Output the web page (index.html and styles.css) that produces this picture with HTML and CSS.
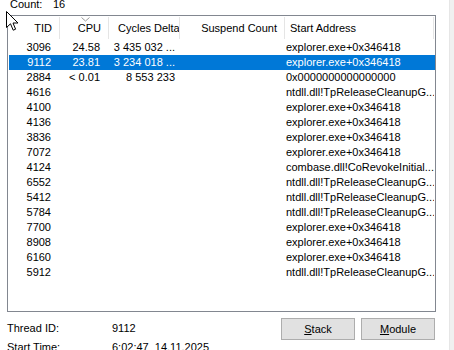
FILE: index.html
```html
<!DOCTYPE html>
<html lang="en">
<head>
    <meta charset="UTF-8">
    <meta name="viewport" content="width=device-width, initial-scale=1.0">
    <link rel="stylesheet" href="styles.css">
    <title>Threads</title>
</head>
<body>
  <div id="page">
    <div id="main">
      <div class="count">
        <span class="count-label">Count:</span>
        <span>16</span>
      </div>

      <div id="thread-list">
        <div class="list-header">
          <div class="hcell num">TID</div>
          <div class="hcell num sorted">
            <svg class="sort-arrow" width="9" height="5" viewBox="0 0 9 5">
              <polyline points="0.5,0.5 4.5,4 8.5,0.5" fill="none" stroke="#9a9a9a" stroke-width="1"/>
            </svg>
            CPU
          </div>
          <div class="hcell cycles">Cycles Delta</div>
          <div class="hcell num">Suspend Count</div>
          <div class="hcell addr">Start Address</div>
        </div>

        <div class="row">
          <span class="tid">3096</span><span class="cpu">24.58</span><span class="cyc">3 435 032 ...</span><span></span><span class="addr">explorer.exe+0x346418</span>
        </div>
        <div class="row selected">
          <span class="tid">9112</span><span class="cpu">23.81</span><span class="cyc">3 234 018 ...</span><span></span><span class="addr">explorer.exe+0x346418</span>
        </div>
        <div class="row">
          <span class="tid">2884</span><span class="cpu">&lt; 0.01</span><span class="cyc">8 553 233</span><span></span><span class="addr">0x0000000000000000</span>
        </div>
        <div class="row">
          <span class="tid">4616</span><span></span><span></span><span></span><span class="addr">ntdll.dll!TpReleaseCleanupG...</span>
        </div>
        <div class="row">
          <span class="tid">4100</span><span></span><span></span><span></span><span class="addr">explorer.exe+0x346418</span>
        </div>
        <div class="row">
          <span class="tid">4136</span><span></span><span></span><span></span><span class="addr">explorer.exe+0x346418</span>
        </div>
        <div class="row">
          <span class="tid">3836</span><span></span><span></span><span></span><span class="addr">explorer.exe+0x346418</span>
        </div>
        <div class="row">
          <span class="tid">7072</span><span></span><span></span><span></span><span class="addr">explorer.exe+0x346418</span>
        </div>
        <div class="row">
          <span class="tid">4124</span><span></span><span></span><span></span><span class="addr">combase.dll!CoRevokeInitial...</span>
        </div>
        <div class="row">
          <span class="tid">6552</span><span></span><span></span><span></span><span class="addr">ntdll.dll!TpReleaseCleanupG...</span>
        </div>
        <div class="row">
          <span class="tid">5412</span><span></span><span></span><span></span><span class="addr">ntdll.dll!TpReleaseCleanupG...</span>
        </div>
        <div class="row">
          <span class="tid">5784</span><span></span><span></span><span></span><span class="addr">ntdll.dll!TpReleaseCleanupG...</span>
        </div>
        <div class="row">
          <span class="tid">7700</span><span></span><span></span><span></span><span class="addr">explorer.exe+0x346418</span>
        </div>
        <div class="row">
          <span class="tid">8908</span><span></span><span></span><span></span><span class="addr">explorer.exe+0x346418</span>
        </div>
        <div class="row">
          <span class="tid">6160</span><span></span><span></span><span></span><span class="addr">explorer.exe+0x346418</span>
        </div>
        <div class="row">
          <span class="tid">5912</span><span></span><span></span><span></span><span class="addr">ntdll.dll!TpReleaseCleanupG...</span>
        </div>
      </div>

      <div id="details">
        <div class="info">
          <div class="info-line"><span class="info-label">Thread ID:</span><span>9112</span></div>
          <div class="info-line"><span class="info-label">Start Time:</span><span>6:02:47&nbsp;&nbsp;14.11.2025</span></div>
        </div>
        <div class="buttons">
          <button class="btn"><u>S</u>tack</button>
          <button class="btn"><u>M</u>odule</button>
        </div>
      </div>
    </div>
    <div id="side-strip"></div>
  </div>

  <!-- mouse pointer left over the list -->
  <svg id="cursor" width="13" height="21" viewBox="0 0 13 21">
    <path d="M0.5,0.5 L0.5,16.5 L4.5,12.8 L7.2,19.2 L9.6,18.2 L7,12 L12,12 Z" fill="#ffffff" stroke="#000000" stroke-width="1" stroke-linejoin="miter"/>
  </svg>
</body>
</html>
```

FILE: styles.css
```css
html, body {
    margin: 0;
    padding: 0;
    background-color: #FFFFFF;
    font-family: 'Liberation Sans', Arial, Helvetica, sans-serif;
    font-size: 11px;
    color: #000000;
    overflow: hidden;
}

#page {
    display: flex;
    height: 350px;
}

#main {
    width: 449px;
    flex: none;
}

#side-strip {
    flex: 1;
    background-color: #F0F0F0;
    border-left: 1px solid #E6E6E6;
}

.count {
    display: flex;
    height: 17px;
    margin-top: -2px;
    padding-left: 10px;
    line-height: 13px;
}

.count-label {
    width: 43px;
}

/* list view */
#thread-list {
    box-sizing: border-box;
    margin-left: 7px;
    width: 429px;
    height: 297px;
    border: 1px solid #828790;
    overflow: hidden;
}

.list-header,
.row {
    display: grid;
    grid-template-columns: 52px 49px 71px 105px 149px;
}

.list-header {
    height: 24px;
}

.hcell {
    position: relative;
    box-sizing: border-box;
    margin: 1px 0;
    border-right: 1px solid #E5E5E5;
    line-height: 22px;
    white-space: nowrap;
    overflow: hidden;
}

.hcell.num {
    text-align: right;
    padding-right: 7px;
}

.hcell.cycles {
    padding-left: 9px;
}

.hcell.addr {
    padding-left: 5px;
}

.sort-arrow {
    position: absolute;
    left: 21px;
    top: 0;
}

.row {
    height: 15px;
    line-height: 15px;
    white-space: nowrap;
}

.row > span {
    overflow: hidden;
}

.row .tid,
.row .cpu {
    text-align: right;
    padding-right: 9px;
}

.row .cyc {
    text-align: right;
    padding-right: 5px;
}

.row .addr {
    padding-left: 1px;
}

.row.selected {
    background-color: #0078D7;
    color: #FFFFFF;
    margin-left: 1px;
    grid-template-columns: 51px 49px 71px 105px 149px;
}

/* bottom part */
#details {
    display: flex;
    justify-content: space-between;
    padding-top: 7px;
    padding-left: 7px;
    padding-right: 14px;
}

.info-line {
    display: flex;
    height: 19px;
    line-height: 19px;
}

.info-label {
    width: 105px;
}

.buttons {
    display: flex;
    gap: 6px;
    margin-top: -1px;
}

.btn {
    box-sizing: border-box;
    width: 74px;
    height: 22px;
    background-color: #E1E1E1;
    border: 1px solid #ADADAD;
    border-radius: 0;
    font-family: 'Liberation Sans', Arial, Helvetica, sans-serif;
    font-size: 11px;
    color: #000000;
    padding: 0;
}

#cursor {
    position: absolute;
    left: 6px;
    top: 11px;
}
```
